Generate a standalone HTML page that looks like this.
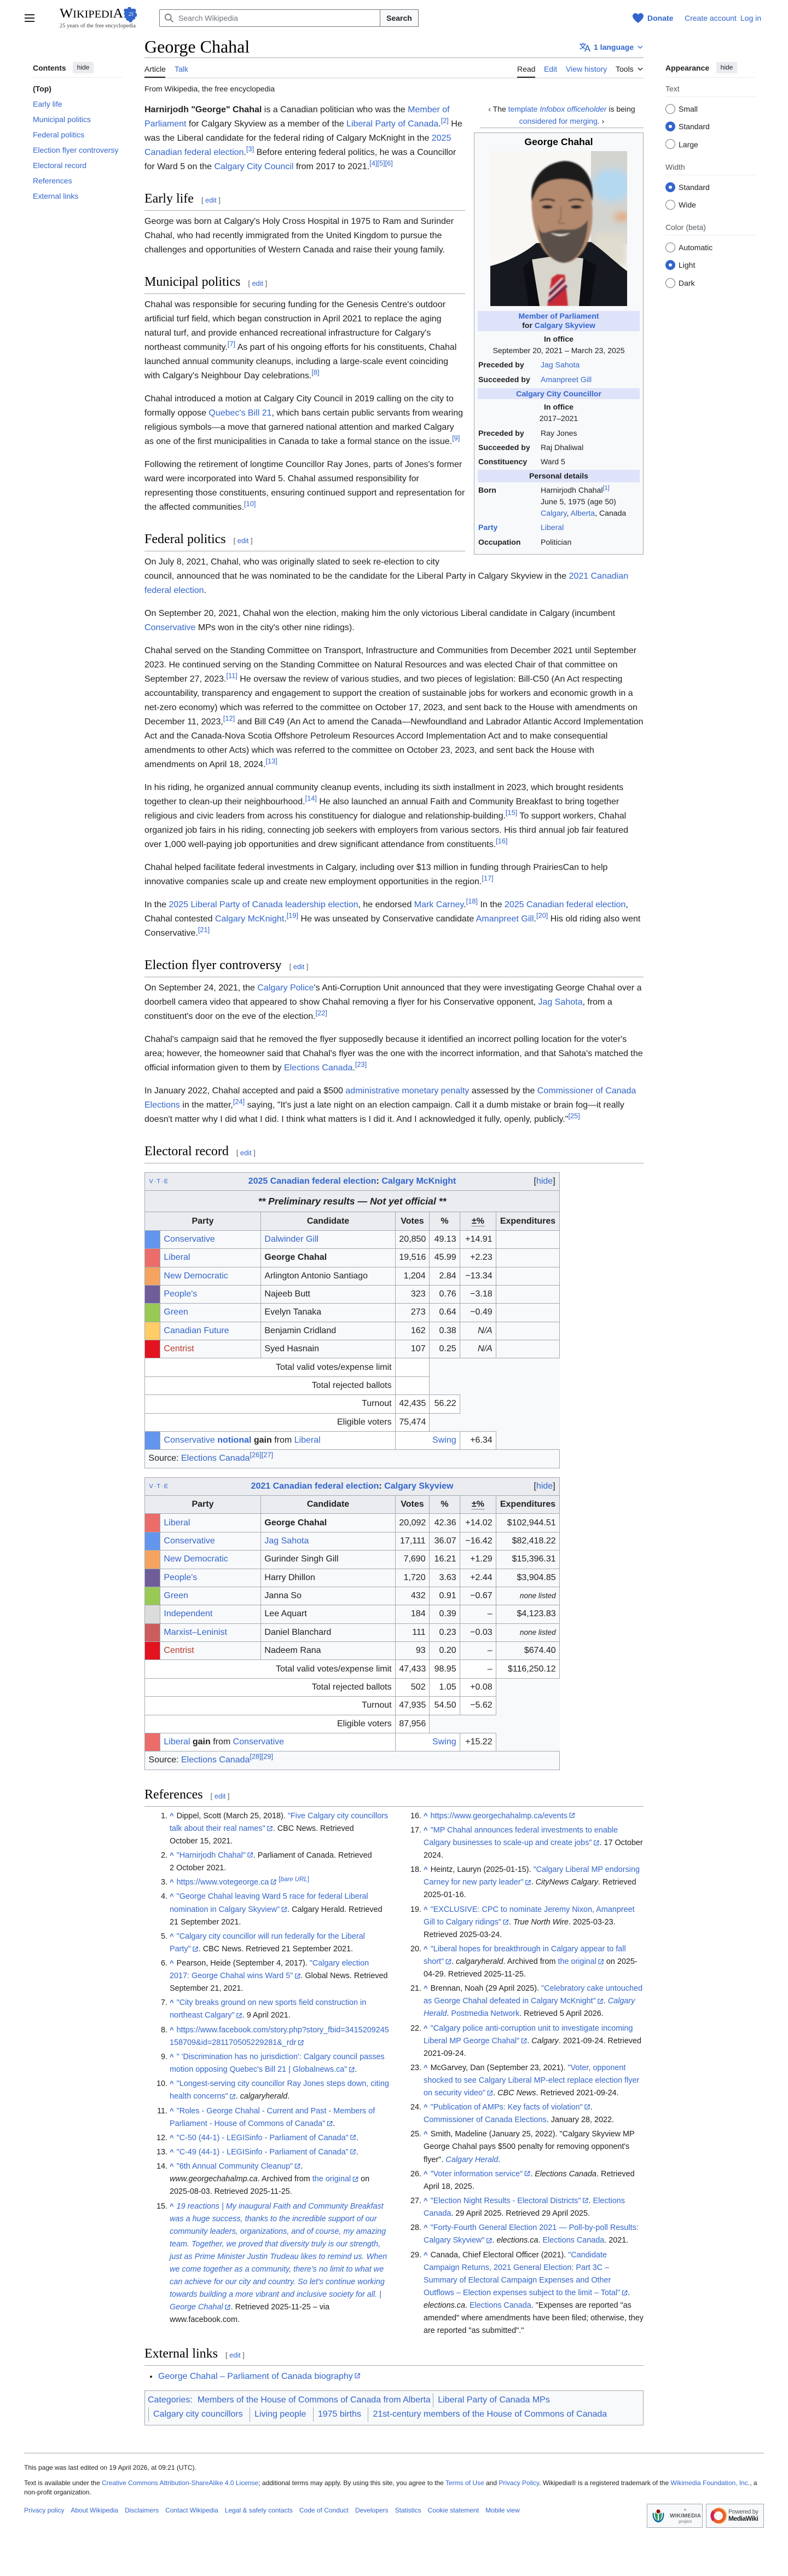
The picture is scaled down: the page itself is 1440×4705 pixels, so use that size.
<!DOCTYPE html>
<html lang="en"><head><meta charset="utf-8"><title>George Chahal - Wikipedia</title>
<style>
*{box-sizing:border-box}
html,body{margin:0;padding:0;background:#fff}
body{width:1440px;height:4705px;overflow:hidden;position:relative;font:16px/26px "Liberation Sans",Arial,sans-serif;color:#202122}
a{color:#36c;text-decoration:none}
.abs{position:absolute;white-space:nowrap}
.s14{font-size:14px;line-height:20px}
.nw{white-space:nowrap}
#content{position:absolute;left:264px;top:188px;width:912px}
p{margin:0 0 16px}
h2{font:400 24px/33px "Liberation Serif",serif;color:#000;margin:29px 0 7px;padding:0 0 4px;border-bottom:1px solid #a2a9b1;overflow:hidden}
h2 .ed{font:12.8px/20px "Liberation Sans",sans-serif;margin-left:14px;color:#54595d}
sup{font-size:12.8px;line-height:1;color:#36c;vertical-align:super}
.hat{float:right;clear:right;width:299px;margin:0 0 8px 27px;text-align:center;font-size:14px;line-height:22px;border-bottom:1px solid #a2a9b1;padding-bottom:1px;height:46px}
#ib{float:right;clear:right;width:310px;height:771px;margin:0 0 16px 16px;position:relative;background:#f8f9fa;border:1px solid #a2a9b1;font-size:14.08px;line-height:20px}
#ib div{position:absolute;white-space:nowrap}
#ib .c{left:0;width:308px;text-align:center}
#ib .lb{left:7px;font-weight:700}
#ib .d{left:121px}
#ib .bd{left:6px;width:296px;background:#dfe3fa}
#ib sup{font-size:11px}
table.w{border-collapse:collapse;table-layout:fixed;width:758px;margin:16px 0;background:#f8f9fa;color:#202122}
table.w td,table.w th{border:1px solid #a2a9b1;padding:3.2px 6.4px;line-height:26px;white-space:nowrap;overflow:visible}
table.w th{background:#eaecf0;text-align:center}
table.w td.r{text-align:right}
table.w td.wh{background:#fff}
table.w td.n{border:0;background:#f8f9fa}
table.w td.p{padding:0}
table.w td.sm{font-size:13.6px;font-style:italic;text-align:right}
.tt{position:relative;font-weight:700}
.vte{position:absolute;left:1px;top:0;font:400 11px/26px "Liberation Sans",sans-serif;color:#36c;letter-spacing:1.5px}
.hd{position:absolute;right:1px;top:0;font-weight:400}
.dot{border-bottom:1px dotted #202122}
.refs{display:flex;gap:16px;font-size:14.4px;line-height:23.04px;margin-top:-2px}
.refs ol{width:448px;margin:0;padding:0 0 0 46px}
.refs li{margin:0 0 2.2px}
.refs b{color:#36c;font-size:13px;margin-right:1px}
a.e{padding-right:14px}
a.e::after{content:"";position:absolute;width:11px;height:11px;margin:6px 0 0 3px;background:#36c;clip-path:path(evenodd,"M8.4 8.4H1.8V1.8h3V.6h-3A1.2 1.2 0 0 0 .6 1.8v6.6a1.2 1.2 0 0 0 1.2 1.2h6.6a1.2 1.2 0 0 0 1.2-1.2v-3H8.4z M6.6.6v1.2h1.56L3.78 6.18l.84.84L9 2.64v1.56h1.2V.6z")}
.cat{position:absolute;left:264px;top:4366px;width:912px;height:64px;border:1px solid #a2a9b1;background:#f8f9fa;padding:4px 5px}
.cat span{display:inline-block;padding:0 8px;border-left:1px solid #a2a9b1;line-height:26px}
.cat span.f{border:0;padding:0 0 0 9px}
.r18{position:absolute;left:1216px;width:18px;height:18px;border-radius:50%;border:1px solid #72777d;background:#fff}
.r18.on{border:6px solid #36c}
.rl{position:absolute;left:1240px;font-size:14px;line-height:20px}
.pl{position:absolute;left:1216px;font-size:14px;line-height:20px;color:#54595d}
.ln{position:absolute;height:1px;background:#eaecf0}
.toc{position:absolute;left:60px;font-size:14px;line-height:20px}
.btn{position:absolute;background:#eaecf0;font-size:12px;line-height:21px;height:21px;text-align:center;border-radius:2px}
.ft{position:absolute;font-size:12px;line-height:17px;white-space:nowrap}
.ftl a{margin-right:12px}
</style></head><body>

<!-- header -->
<svg class="abs" style="left:45px;top:26px" width="18" height="14"><path d="M0 0h18v2H0zM0 6h18v2H0zM0 12h18v2H0z" fill="#202122"/></svg>
<svg class="abs" style="left:109px;top:10px" width="142" height="44">
<text x="0" y="22" font-family="Liberation Serif,serif" font-size="19" fill="#000" textLength="116" lengthAdjust="spacingAndGlyphs"><tspan font-size="24">W</tspan>IKIPEDI<tspan font-size="24">A</tspan></text>
<text x="0" y="40" font-family="Liberation Serif,serif" font-size="10" fill="#444" textLength="139" lengthAdjust="spacingAndGlyphs">25 years of the free encyclopedia</text>
<path d="M118 6h6l1-3h5l1 3h7l2 4-2 2 3 3v5l-3 1v4l-4 1-2 4-4 1-2-3-4-1-1-4-3-1 1-4-2-3 2-3-2-2z" fill="#36c"/>
<text x="126" y="19" font-family="Liberation Serif,serif" font-size="9" fill="#fff" font-style="italic">25</text>
</svg>
<div style="position:absolute;left:291px;top:17px;width:474px;height:32px;border:1px solid #72777d;border-radius:2px;background:#fff"></div>
<div style="position:absolute;left:694px;top:17px;width:71px;height:32px;border:1px solid #72777d;background:#f8f9fa;font:700 14px/30px 'Liberation Sans',sans-serif;text-align:center">Search</div>
<svg class="abs" style="left:300px;top:24px" width="18" height="18" viewBox="0 0 20 20"><path d="M12.2 13.6a7 7 0 111.4-1.4l5.4 5.4-1.4 1.4zM3 8a5 5 0 1010 0A5 5 0 003 8" fill="#72777d"/></svg>
<div class="abs s14" style="left:326px;top:23px;color:#72777d">Search Wikipedia</div>
<svg class="abs" style="left:1156px;top:23px" width="20" height="20" viewBox="0 0 20 20"><path d="M14.75 1A5.24 5.24 0 0010 4 5.24 5.24 0 000 6.25C0 11.75 10 19 10 19s10-7.25 10-12.75A5.25 5.25 0 0014.75 1" fill="#36c"/></svg>
<div class="abs s14" style="left:1183px;top:23px;font-weight:700;color:#36c">Donate</div>
<div class="abs s14" style="left:1251px;top:23px;color:#36c">Create account</div>
<div class="abs s14" style="left:1353px;top:23px;color:#36c">Log in</div>

<!-- left toc -->
<div class="toc" style="top:114px;font-weight:700">Contents</div>
<div class="btn" style="left:133px;top:113px;width:38px">hide</div>
<div class="ln" style="left:60px;top:141px;width:164px"></div>
<div class="toc" style="top:152px;font-weight:700">(Top)</div>
<a class="toc" style="top:180px">Early life</a>
<a class="toc" style="top:208px">Municipal politics</a>
<a class="toc" style="top:236px">Federal politics</a>
<a class="toc" style="top:264px">Election flyer controversy</a>
<a class="toc" style="top:292px">Electoral record</a>
<a class="toc" style="top:320px">References</a>
<a class="toc" style="top:348px">External links</a>

<!-- right appearance -->
<div class="toc" style="left:1216px;top:114px;font-weight:700">Appearance</div>
<div class="btn" style="left:1309px;top:113px;width:38px">hide</div>
<div class="ln" style="left:1216px;top:141px;width:164px"></div>
<div class="pl" style="top:152px">Text</div><div class="ln" style="left:1216px;top:176px;width:164px"></div>
<div class="r18" style="top:190px"></div><div class="rl" style="top:189px">Small</div>
<div class="r18 on" style="top:222px"></div><div class="rl" style="top:221px">Standard</div>
<div class="r18" style="top:254px"></div><div class="rl" style="top:254px">Large</div>
<div class="pl" style="top:295px">Width</div><div class="ln" style="left:1216px;top:319px;width:164px"></div>
<div class="r18 on" style="top:333px"></div><div class="rl" style="top:332px">Standard</div>
<div class="r18" style="top:365px"></div><div class="rl" style="top:364px">Wide</div>
<div class="pl" style="top:405px">Color (beta)</div><div class="ln" style="left:1216px;top:429px;width:164px"></div>
<div class="r18" style="top:443px"></div><div class="rl" style="top:442px">Automatic</div>
<div class="r18 on" style="top:475px"></div><div class="rl" style="top:474px">Light</div>
<div class="r18" style="top:508px"></div><div class="rl" style="top:507px">Dark</div>

<!-- title + tabs -->
<div class="abs" style="left:264px;top:65px;font:400 32px/40px 'Liberation Serif',serif;color:#000">George Chahal</div>
<div style="position:absolute;left:264px;top:105px;width:912px;height:1px;background:#a2a9b1"></div>
<svg class="abs" style="left:1059px;top:76px" width="20" height="20" viewBox="0 0 20 20"><path fill="#36c" d="M20 18h-1.44a.6.6 0 01-.4-.12.8.8 0 01-.23-.31L17 15h-5l-1 2.54a.8.8 0 01-.22.3.6.6 0 01-.4.14H9l4.55-11.47h1.89zm-3.53-4.31L14.89 9.5a12 12 0 01-.39-1.24q-.09.37-.19.69l-.19.56-1.58 4.19zm-6.3-1.58a13.4 13.4 0 01-2.91-1.41 11.46 11.46 0 002.81-5.37H12V4H7.31a4 4 0 00-.2-.56C6.87 2.79 6.6 2 6.6 2l-1.47.5s.4.89.6 1.5H0v1.33h2.15A11.23 11.23 0 005 10.7a17.19 17.19 0 01-5 2.1q.56.82.87 1.38a23.28 23.28 0 005.22-2.51 15.64 15.64 0 003.56 1.77zM3.63 5.33h4.91a8.11 8.11 0 01-2.45 4.45 9.11 9.11 0 01-2.46-4.45z"/></svg>
<div class="abs s14" style="left:1085px;top:76px;font-weight:700;color:#36c">1 language</div>
<svg class="abs" style="left:1165px;top:81px" width="10" height="10" viewBox="0 0 10 10"><path d="M1 3l4 4 4-4" fill="none" stroke="#36c" stroke-width="1.4"/></svg>
<div class="abs s14" style="left:264px;top:116px">Article</div>
<div class="abs s14" style="left:319px;top:116px;color:#36c">Talk</div>
<div class="abs s14" style="left:945px;top:116px">Read</div>
<div class="abs s14" style="left:994px;top:116px;color:#36c">Edit</div>
<div class="abs s14" style="left:1034px;top:116px;color:#36c">View history</div>
<div class="abs s14" style="left:1125px;top:116px;color:#202122">Tools</div>
<svg class="abs" style="left:1165px;top:121px" width="10" height="10" viewBox="0 0 10 10"><path d="M1 3l4 4 4-4" fill="none" stroke="#202122" stroke-width="1.4"/></svg>
<div style="position:absolute;left:264px;top:142px;width:912px;height:1px;background:#c8ccd1"></div>
<div style="position:absolute;left:264px;top:140px;width:38px;height:2px;background:#202122"></div>
<div style="position:absolute;left:945px;top:140px;width:33px;height:2px;background:#202122"></div>
<div class="abs s14" style="left:264px;top:152px">From Wikipedia, the free encyclopedia</div>

<div id="content">
<div class="hat">‹ The <a>template</a> <a><i>Infobox officeholder</i></a> is being <a>considered for merging.</a> ›</div>
<div id="ib">
 <div class="c" style="top:5px;font-size:17.6px;font-weight:700;line-height:22px;color:#000">George Chahal</div>
 <div style="left:29px;top:33px;width:250px;height:283px;overflow:hidden">
 <svg width="250" height="283" viewBox="0 0 250 283">
  <defs><filter id="b1"><feGaussianBlur stdDeviation="6"/></filter><filter id="b2"><feGaussianBlur stdDeviation="1.4"/></filter></defs>
  <rect width="250" height="283" fill="#f8f7f4"/>
  <rect x="184" width="66" height="170" fill="#d3d4d0"/>
  <g filter="url(#b1)"><ellipse cx="222" cy="62" rx="36" ry="30" fill="#b4d8f0"/><ellipse cx="240" cy="120" rx="14" ry="7" fill="#e7a274"/><rect x="190" y="150" width="60" height="60" fill="#e0dcce"/></g>
  <path d="M0 210C30 202 60 188 84 168L184 166C205 180 230 205 250 219V283H0z" fill="#16191f"/>
  <path d="M76 198L127 190 170 196 162 283H90z" fill="#d8d6cc"/>
  <g filter="url(#b2)">
   <path d="M112 232L122 225 136 226 142 283H104z" fill="#c92a35"/>
   <path d="M108 262L134 236M106 276L140 246" stroke="#1d2d5c" stroke-width="3.5"/>
   <path d="M108 256L132 232M106 270L138 240" stroke="#eee" stroke-width="2"/>
   <path d="M78 70C72 100 78 130 84 150 92 180 110 202 135 204 160 203 178 178 184 145 190 110 186 75 172 55 150 32 100 35 78 70z" fill="#b48a6e"/>
   <path d="M86 130C92 160 100 146 120 144 140 140 158 152 178 126 178 165 162 202 134 204 108 202 90 170 86 130z" fill="#5a5048"/>
   <path d="M110 149q19 6 36 0q-17 12-36 0z" fill="#efe8de"/>
   <path d="M76 92C70 55 95 22 135 18 172 18 192 55 186 92 182 74 176 62 162 56 130 46 110 52 92 62 84 70 80 80 76 92z" fill="#1c1a1a"/>
   <ellipse cx="104" cy="102" rx="10" ry="3.2" fill="#2b2120"/><ellipse cx="157" cy="102" rx="10" ry="3.2" fill="#2b2120"/>
   <path d="M90 91q14-6 28 0M143 91q14-6 28 0" stroke="#2a1f1c" stroke-width="3" fill="none"/>
   <path d="M129 102v22q-8 6-2 8h10" stroke="#8f6a52" stroke-width="2.2" fill="none"/>
  </g>
  <path d="M76 198L90 283H70L60 212zM170 196L162 283H182L194 208z" fill="#0c0e14"/>
 </svg></div>
 <div class="bd" style="top:325px;height:37px"></div>
 <div class="c" style="font-weight:700;line-height:17px;top:326px;color:#36c">Member of Parliament<br><span style="color:#202122">for</span> Calgary Skyview</div>
 <div class="c" style="top:366px;font-weight:700">In office</div>
 <div class="c" style="top:387px">September 20, 2021 – March 23, 2025</div>
 <div class="lb" style="top:413px">Preceded by</div><div class="d" style="top:413px"><a>Jag Sahota</a></div>
 <div class="lb" style="top:440px">Succeeded by</div><div class="d" style="top:440px"><a>Amanpreet Gill</a></div>
 <div class="bd" style="top:466px;height:20px"></div>
 <div class="c" style="top:466px;font-weight:700;color:#36c">Calgary City Councillor</div>
 <div class="c" style="top:490px;font-weight:700">In office</div>
 <div class="c" style="top:511px">2017–2021</div>
 <div class="lb" style="top:538px">Preceded by</div><div class="d" style="top:538px">Ray Jones</div>
 <div class="lb" style="top:564px">Succeeded by</div><div class="d" style="top:564px">Raj Dhaliwal</div>
 <div class="lb" style="top:590px">Constituency</div><div class="d" style="top:590px">Ward 5</div>
 <div class="bd" style="top:615px;height:23px"></div>
 <div class="c" style="top:616px;font-weight:700">Personal details</div>
 <div class="lb" style="top:642px">Born</div><div class="d" style="top:642px">Harnirjodh Chahal<sup>[1]</sup></div>
 <div class="d" style="top:663px">June 5, 1975 (age 50)</div>
 <div class="d" style="top:684px"><a>Calgary</a>, <a>Alberta</a>, Canada</div>
 <div class="lb" style="top:710px;color:#36c">Party</div><div class="d" style="top:710px"><a>Liberal</a></div>
 <div class="lb" style="top:737px">Occupation</div><div class="d" style="top:737px">Politician</div>
</div>

<p><b>Harnirjodh "George" Chahal</b> is a Canadian politician who was the <a>Member of Parliament</a> for Calgary Skyview as a member of the <a>Liberal Party of Canada</a>.<sup>[2]</sup> He was the Liberal candidate for the federal riding of Calgary McKnight in the <a>2025 Canadian federal election</a>.<sup>[3]</sup> Before entering federal politics, he was a Councillor for Ward 5 on the <a>Calgary City Council</a> from 2017 to 2021.<sup>[4][5][6]</sup></p>

<h2>Early life<span class="ed">[ <a>edit</a> ]</span></h2>
<p>George was born at Calgary's Holy Cross Hospital in 1975 to Ram and Surinder Chahal, who had recently immigrated from the United Kingdom to pursue the challenges and opportunities of Western Canada and raise their young family.</p>

<h2>Municipal politics<span class="ed">[ <a>edit</a> ]</span></h2>
<p>Chahal was responsible for securing funding for the Genesis Centre's outdoor artificial turf field, which began construction in April 2021 to replace the aging natural turf, and provide enhanced recreational infrastructure for Calgary's northeast community.<sup>[7]</sup> As part of his ongoing efforts for his constituents, Chahal launched annual community cleanups, including a large-scale event coinciding with Calgary's Neighbour Day celebrations.<sup>[8]</sup></p>
<p>Chahal introduced a motion at Calgary City Council in 2019 calling on the city to formally oppose <a>Quebec's Bill 21</a>, which bans certain public servants from wearing religious symbols—a move that garnered national attention and marked Calgary as one of the first municipalities in Canada to take a formal stance on the issue.<sup>[9]</sup></p>
<p>Following the retirement of longtime Councillor Ray Jones, parts of Jones's former ward were incorporated into Ward 5. Chahal assumed responsibility for representing those constituents, ensuring continued support and representation for the affected communities.<sup>[10]</sup></p>

<h2>Federal politics<span class="ed">[ <a>edit</a> ]</span></h2>
<p>On July 8, 2021, Chahal, who was originally slated to seek re-election to city council, announced that he was nominated to be the candidate for the Liberal Party in Calgary Skyview in the <a>2021 Canadian federal election</a>.</p>
<p>On September 20, 2021, Chahal won the election, making him the only victorious Liberal candidate in Calgary (incumbent <a>Conservative</a> MPs won in the city's other nine ridings).</p>
<p>Chahal served on the Standing Committee on Transport, Infrastructure and Communities from December 2021 until September 2023. He continued serving on the Standing Committee on Natural Resources and was elected Chair of that committee on September 27, 2023.<sup>[11]</sup> He oversaw the review of various studies, and two pieces of legislation: Bill-C50 (An Act respecting accountability, transparency and engagement to support the creation of sustainable jobs for workers and economic growth in a net-zero economy) which was referred to the committee on October 17, 2023, and sent back to the House with amendments on December 11, 2023,<sup>[12]</sup> and Bill C49 (An Act to amend the Canada—Newfoundland and Labrador Atlantic Accord Implementation Act and the Canada-Nova Scotia Offshore Petroleum Resources Accord Implementation Act and to make consequential amendments to other Acts) which was referred to the committee on October 23, 2023, and sent back the House with amendments on April 18, 2024.<sup>[13]</sup></p>
<p>In his riding, he organized annual community cleanup events, including its sixth installment in 2023, which brought residents together to clean-up their neighbourhood.<sup>[14]</sup> He also launched an annual Faith and Community Breakfast to bring together religious and civic leaders from across his constituency for dialogue and relationship-building.<sup>[15]</sup> To support workers, Chahal organized job fairs in his riding, connecting job seekers with employers from various sectors. His third annual job fair featured over 1,000 well-paying job opportunities and drew significant attendance from constituents.<sup>[16]</sup></p>
<p>Chahal helped facilitate federal investments in Calgary, including over $13 million in funding through PrairiesCan to help innovative companies scale up and create new employment opportunities in the region.<sup>[17]</sup></p>
<p>In the <a>2025 Liberal Party of Canada leadership election</a>, he endorsed <a>Mark Carney</a>.<sup>[18]</sup> In the <a>2025 Canadian federal election</a>, Chahal contested <a>Calgary McKnight</a>.<sup>[19]</sup> He was unseated by Conservative candidate <a>Amanpreet Gill</a>.<sup>[20]</sup> His old riding also went Conservative.<sup>[21]</sup></p>

<h2>Election flyer controversy<span class="ed">[ <a>edit</a> ]</span></h2>
<p>On September 24, 2021, the <a>Calgary Police</a>'s Anti-Corruption Unit announced that they were investigating George Chahal over a doorbell camera video that appeared to show Chahal removing a flyer for his Conservative opponent, <a>Jag Sahota</a>, from a constituent's door on the eve of the election.<sup>[22]</sup></p>
<p>Chahal's campaign said that he removed the flyer supposedly because it identified an incorrect polling location for the voter's area; however, the homeowner said that Chahal's flyer was the one with the incorrect information, and that Sahota's matched the official information given to them by <a>Elections Canada</a>.<sup>[23]</sup></p>
<p>In January 2022, Chahal accepted and paid a $500 <a>administrative monetary penalty</a> assessed by the <a>Commissioner of Canada Elections</a> in the matter,<sup>[24]</sup> saying, "It's just a late night on an election campaign. Call it a dumb mistake or brain fog—it really doesn't matter why I did what I did. I think what matters is I did it. And I acknowledged it fully, openly, publicly."<sup>[25]</sup></p>

<h2>Electoral record<span class="ed">[ <a>edit</a> ]</span></h2>

<table class="w">
<colgroup><col style="width:28px"><col style="width:184px"><col style="width:246px"><col style="width:62px"><col style="width:56px"><col style="width:66px"><col style="width:116px"></colgroup>
<tr><th colspan="7"><div class="tt"><span class="vte">V·T·E</span><a>2025 Canadian federal election</a>: <a>Calgary McKnight</a><span class="hd">[<a>hide</a>]</span></div></th></tr>
<tr><th colspan="7" style="font-size:17.6px;font-style:italic;height:39px">** Preliminary results — Not yet official **</th></tr>
<tr><th colspan="2">Party</th><th>Candidate</th><th>Votes</th><th>%</th><th><span class="dot">±%</span></th><th>Expenditures</th></tr>
<tr><td class="p" style="background:#6495ED"></td><td><a>Conservative</a></td><td><a>Dalwinder Gill</a></td><td class="r">20,850</td><td class="r">49.13</td><td class="r">+14.91</td><td></td></tr>
<tr><td class="p" style="background:#EA6D6A"></td><td><a>Liberal</a></td><td><b>George Chahal</b></td><td class="r">19,516</td><td class="r">45.99</td><td class="r">+2.23</td><td></td></tr>
<tr><td class="p" style="background:#F4A460"></td><td><a>New Democratic</a></td><td>Arlington Antonio Santiago</td><td class="r">1,204</td><td class="r">2.84</td><td class="r">−13.34</td><td></td></tr>
<tr><td class="p" style="background:#6F5D9A"></td><td><a>People's</a></td><td>Najeeb Butt</td><td class="r">323</td><td class="r">0.76</td><td class="r">−3.18</td><td></td></tr>
<tr><td class="p" style="background:#99C955"></td><td><a>Green</a></td><td>Evelyn Tanaka</td><td class="r">273</td><td class="r">0.64</td><td class="r">−0.49</td><td></td></tr>
<tr><td class="p" style="background:#FFCC66"></td><td><a>Canadian Future</a></td><td>Benjamin Cridland</td><td class="r">162</td><td class="r">0.38</td><td class="r"><i>N/A</i></td><td></td></tr>
<tr><td class="p" style="background:#E2131E"></td><td><a style="color:#ba3a2e">Centrist</a></td><td>Syed Hasnain</td><td class="r">107</td><td class="r">0.25</td><td class="r"><i>N/A</i></td><td></td></tr>
<tr><td class="r wh" colspan="3">Total valid votes/expense limit</td><td class="wh"></td><td class="n" colspan="3"></td></tr>
<tr><td class="r wh" colspan="3">Total rejected ballots</td><td class="wh"></td><td class="n" colspan="3"></td></tr>
<tr><td class="r wh" colspan="3">Turnout</td><td class="r wh">42,435</td><td class="r wh">56.22</td><td class="n" colspan="2"></td></tr>
<tr><td class="r wh" colspan="3">Eligible voters</td><td class="r wh">75,474</td><td class="n" colspan="3"></td></tr>
<tr><td class="p" style="background:#6495ED"></td><td class="wh" colspan="2"><a>Conservative</a> <b><a>notional</a> gain</b> from <a>Liberal</a></td><td class="r wh" colspan="2"><a>Swing</a></td><td class="r wh">+6.34</td><td class="n"></td></tr>
<tr><td colspan="7" style="background:#f8f9fa">Source: <a>Elections Canada</a><sup>[26][27]</sup></td></tr>
</table>

<table class="w">
<colgroup><col style="width:28px"><col style="width:184px"><col style="width:246px"><col style="width:62px"><col style="width:56px"><col style="width:66px"><col style="width:116px"></colgroup>
<tr><th colspan="7"><div class="tt"><span class="vte">V·T·E</span><a>2021 Canadian federal election</a>: <a>Calgary Skyview</a><span class="hd">[<a>hide</a>]</span></div></th></tr>
<tr><th colspan="2">Party</th><th>Candidate</th><th>Votes</th><th>%</th><th><span class="dot">±%</span></th><th>Expenditures</th></tr>
<tr><td class="p" style="background:#EA6D6A"></td><td><a>Liberal</a></td><td><b>George Chahal</b></td><td class="r">20,092</td><td class="r">42.36</td><td class="r">+14.02</td><td class="r">$102,944.51</td></tr>
<tr><td class="p" style="background:#6495ED"></td><td><a>Conservative</a></td><td><a>Jag Sahota</a></td><td class="r">17,111</td><td class="r">36.07</td><td class="r">−16.42</td><td class="r">$82,418.22</td></tr>
<tr><td class="p" style="background:#F4A460"></td><td><a>New Democratic</a></td><td>Gurinder Singh Gill</td><td class="r">7,690</td><td class="r">16.21</td><td class="r">+1.29</td><td class="r">$15,396.31</td></tr>
<tr><td class="p" style="background:#6F5D9A"></td><td><a>People's</a></td><td>Harry Dhillon</td><td class="r">1,720</td><td class="r">3.63</td><td class="r">+2.44</td><td class="r">$3,904.85</td></tr>
<tr><td class="p" style="background:#99C955"></td><td><a>Green</a></td><td>Janna So</td><td class="r">432</td><td class="r">0.91</td><td class="r">−0.67</td><td class="sm">none listed</td></tr>
<tr><td class="p" style="background:#DCDCDC"></td><td><a>Independent</a></td><td>Lee Aquart</td><td class="r">184</td><td class="r">0.39</td><td class="r">–</td><td class="r">$4,123.83</td></tr>
<tr><td class="p" style="background:#CD5C5C"></td><td><a>Marxist–Leninist</a></td><td>Daniel Blanchard</td><td class="r">111</td><td class="r">0.23</td><td class="r">−0.03</td><td class="sm">none listed</td></tr>
<tr><td class="p" style="background:#E2131E"></td><td><a style="color:#ba3a2e">Centrist</a></td><td>Nadeem Rana</td><td class="r">93</td><td class="r">0.20</td><td class="r">–</td><td class="r">$674.40</td></tr>
<tr><td class="r wh" colspan="3">Total valid votes/expense limit</td><td class="r wh">47,433</td><td class="r wh">98.95</td><td class="r wh">–</td><td class="r wh">$116,250.12</td></tr>
<tr><td class="r wh" colspan="3">Total rejected ballots</td><td class="r wh">502</td><td class="r wh">1.05</td><td class="r wh">+0.08</td><td class="n"></td></tr>
<tr><td class="r wh" colspan="3">Turnout</td><td class="r wh">47,935</td><td class="r wh">54.50</td><td class="r wh">−5.62</td><td class="n"></td></tr>
<tr><td class="r wh" colspan="3">Eligible voters</td><td class="r wh">87,956</td><td class="n" colspan="3"></td></tr>
<tr><td class="p" style="background:#EA6D6A"></td><td class="wh" colspan="2"><a>Liberal</a> <b>gain</b> from <a>Conservative</a></td><td class="r wh" colspan="2"><a>Swing</a></td><td class="r wh">+15.22</td><td class="n"></td></tr>
<tr><td colspan="7" style="background:#f8f9fa">Source: <a>Elections Canada</a><sup>[28][29]</sup></td></tr>
</table>

<h2>References<span class="ed">[ <a>edit</a> ]</span></h2>
<div class="refs">
<ol>
<li><b>^</b> Dippel, Scott (March 25, 2018). <a class="e">"Five Calgary city councillors talk about their real names"</a>. CBC News. Retrieved <span class="nw">October 15, 2021</span>.</li>
<li><b>^</b> <a class="e">"Harnirjodh Chahal"</a>. Parliament of Canada. Retrieved <span class="nw">2 October 2021</span>.</li>
<li><b>^</b> <a class="e">https://www.votegeorge.ca</a> <sup style="font-size:11.5px;white-space:nowrap">[<i>bare URL</i>]</sup></li>
<li><b>^</b> <a class="e">"George Chahal leaving Ward 5 race for federal Liberal nomination in Calgary Skyview"</a>. Calgary Herald. Retrieved <span class="nw">21 September 2021</span>.</li>
<li><b>^</b> <a class="e">"Calgary city councillor will run federally for the Liberal Party"</a>. CBC News. Retrieved <span class="nw">21 September 2021</span>.</li>
<li><b>^</b> Pearson, Heide (September 4, 2017). <a class="e">"Calgary election 2017: George Chahal wins Ward 5"</a>. Global News. Retrieved <span class="nw">September 21, 2021</span>.</li>
<li><b>^</b> <a class="e">"City breaks ground on new sports field construction in northeast Calgary"</a>. 9 April 2021.</li>
<li><b>^</b> <a class="e" style="word-break:break-all">https://www.facebook.com/story.php?story_fbid=3415209245158709&amp;id=281170505229281&amp;_rdr</a></li>
<li><b>^</b> <a class="e">" 'Discrimination has no jurisdiction': Calgary council passes motion opposing Quebec's Bill 21 | Globalnews.ca"</a>.</li>
<li><b>^</b> <a class="e">"Longest-serving city councillor Ray Jones steps down, citing health concerns"</a>. <i>calgaryherald</i>.</li>
<li><b>^</b> <a class="e">"Roles - George Chahal - Current and Past - Members of Parliament - House of Commons of Canada"</a>.</li>
<li><b>^</b> <a class="e">"C-50 (44-1) - LEGISinfo - Parliament of Canada"</a>.</li>
<li><b>^</b> <a class="e">"C-49 (44-1) - LEGISinfo - Parliament of Canada"</a>.</li>
<li><b>^</b> <a class="e">"6th Annual Community Cleanup"</a>. <i>www.georgechahalmp.ca</i>. Archived from <a class="e">the original</a> on 2025-08-03. Retrieved 2025-11-25.</li>
<li><b>^</b> <a class="e"><i>19 reactions | My inaugural Faith and Community Breakfast was a huge success, thanks to the incredible support of our community leaders, organizations, and of course, my amazing team. Together, we proved that diversity truly is our strength, just as Prime Minister Justin Trudeau likes to remind us. When we come together as a community, there's no limit to what we can achieve for our city and country. So let's continue working towards building a more vibrant and inclusive society for all. | George Chahal</i></a>. Retrieved 2025-11-25 – via www.facebook.com.</li>
</ol>
<ol start="16">
<li><b>^</b> <a class="e">https://www.georgechahalmp.ca/events</a></li>
<li><b>^</b> <a class="e">"MP Chahal announces federal investments to enable Calgary businesses to scale-up and create jobs"</a>. 17 October 2024.</li>
<li><b>^</b> Heintz, Lauryn (2025-01-15). <a class="e">"Calgary Liberal MP endorsing Carney for new party leader"</a>. <i>CityNews Calgary</i>. Retrieved <span class="nw">2025-01-16</span>.</li>
<li><b>^</b> <a class="e">"EXCLUSIVE: CPC to nominate Jeremy Nixon, Amanpreet Gill to Calgary ridings"</a>. <i>True North Wire</i>. 2025-03-23. Retrieved 2025-03-24.</li>
<li><b>^</b> <a class="e">"Liberal hopes for breakthrough in Calgary appear to fall short"</a>. <i>calgaryherald</i>. Archived from <a class="e">the original</a> on 2025-04-29. Retrieved 2025-11-25.</li>
<li><b>^</b> Brennan, Noah (29 April 2025). <a class="e">"Celebratory cake untouched as George Chahal defeated in Calgary McKnight"</a>. <a><i>Calgary Herald</i></a>. <a>Postmedia Network</a>. Retrieved 5 April 2026.</li>
<li><b>^</b> <a class="e">"Calgary police anti-corruption unit to investigate incoming Liberal MP George Chahal"</a>. <i>Calgary</i>. 2021-09-24. Retrieved <span class="nw">2021-09-24</span>.</li>
<li><b>^</b> McGarvey, Dan (September 23, 2021). <a class="e">"Voter, opponent shocked to see Calgary Liberal MP-elect replace election flyer on security video"</a>. <i>CBC News</i>. Retrieved 2021-09-24.</li>
<li><b>^</b> <a class="e">"Publication of AMPs: Key facts of violation"</a>. <a>Commissioner of Canada Elections</a>. January 28, 2022.</li>
<li><b>^</b> Smith, Madeline (January 25, 2022). "Calgary Skyview MP George Chahal pays $500 penalty for removing opponent's flyer". <a><i>Calgary Herald</i></a>.</li>
<li><b>^</b> <a class="e">"Voter information service"</a>. <i>Elections Canada</i>. Retrieved <span class="nw">April 18, 2025</span>.</li>
<li><b>^</b> <a class="e">"Election Night Results - Electoral Districts"</a>. <a>Elections Canada</a>. 29 April 2025. Retrieved 29 April 2025.</li>
<li><b>^</b> <a class="e">"Forty-Fourth General Election 2021 — Poll-by-poll Results: Calgary Skyview"</a>. <i>elections.ca</i>. <a>Elections Canada</a>. 2021.</li>
<li><b>^</b> Canada, Chief Electoral Officer (2021). <a class="e">"Candidate Campaign Returns, 2021 General Election: Part 3C – Summary of Electoral Campaign Expenses and Other Outflows – Election expenses subject to the limit – Total"</a>. <i>elections.ca</i>. <a>Elections Canada</a>. "Expenses are reported "as amended" where amendments have been filed; otherwise, they are reported "as submitted"."</li>
</ol>
</div>

<h2 style="margin-top:12px">External links<span class="ed">[ <a>edit</a> ]</span></h2>
<ul style="margin:0;padding:0 0 0 25px"><li><a class="e">George Chahal – Parliament of Canada biography</a></li></ul>
</div>

<div class="cat"><a>Categories</a><a>:</a><span class="f"><a>Members of the House of Commons of Canada from Alberta</a></span> <span><a>Liberal Party of Canada MPs</a></span><br><span style="margin-left:1px"><a>Calgary city councillors</a></span> <span><a>Living people</a></span> <span><a>1975 births</a></span> <span><a>21st-century members of the House of Commons of Canada</a></span></div>

<!-- footer -->
<div style="position:absolute;left:44px;top:4480px;width:1352px;height:1px;background:#a2a9b1"></div>
<div class="ft" style="left:44px;top:4499px">This page was last edited on 19 April 2026, at 09:21 (UTC).</div>
<div class="ft" style="left:44px;top:4527px;width:1352px;white-space:normal">Text is available under the <a>Creative Commons Attribution-ShareAlike 4.0 License</a>; additional terms may apply. By using this site, you agree to the <a>Terms of Use</a> and <a>Privacy Policy</a>. Wikipedia® is a registered trademark of the <a>Wikimedia Foundation, Inc.</a>, a non-profit organization.</div>
<div class="ft ftl" style="left:44px;top:4577px"><a>Privacy policy</a><a>About Wikipedia</a><a>Disclaimers</a><a>Contact Wikipedia</a><a>Legal &amp; safety contacts</a><a>Code of Conduct</a><a>Developers</a><a>Statistics</a><a>Cookie statement</a><a>Mobile view</a></div>

<svg class="abs" style="left:1182px;top:4573px" width="102" height="44">
<rect x=".5" y=".5" width="101" height="43" fill="#f8f9fa" stroke="#a2a9b1"/>
<circle cx="21" cy="14" r="3.5" fill="#900"/>
<path d="M15 16a7 12 0 0 0 5 15v-12zM27 16a7 12 0 0 1-5 15v-12z" fill="#396"/>
<path d="M11 16c-2 10 4 18 10 18s12-8 10-18l-2 2c1 7-3 13-8 13s-9-6-8-13z" fill="#069"/>
<text x="42" y="25" font-family="Liberation Sans,sans-serif" font-weight="700" font-size="10" fill="#54595d" textLength="57">WIKIMEDIA</text>
<text x="70" y="13" font-family="Liberation Sans,sans-serif" font-size="7" fill="#72777d" text-anchor="middle">a</text>
<text x="70" y="35" font-family="Liberation Sans,sans-serif" font-size="8" fill="#72777d" text-anchor="middle">project</text>
</svg>
<svg class="abs" style="left:1290px;top:4573px" width="106" height="44">
<rect x=".5" y=".5" width="105" height="43" fill="#f8f9fa" stroke="#a2a9b1"/>
<circle cx="23" cy="22" r="11" fill="none" stroke="#e8602c" stroke-width="6"/>
<path d="M23 8a14 14 0 0 1 0 28" fill="none" stroke="#f39c2b" stroke-width="3" stroke-dasharray="2 2"/>
<path d="M14 14a12 12 0 0 0 0 16" fill="none" stroke="#c9205c" stroke-width="5"/>
<text x="41" y="18" font-family="Liberation Sans,sans-serif" font-size="11" fill="#54595d" textLength="55">Powered by</text>
<text x="41" y="31" font-family="Liberation Sans,sans-serif" font-weight="700" font-size="12" fill="#202122" textLength="55">MediaWiki</text>
</svg>
</body></html>
